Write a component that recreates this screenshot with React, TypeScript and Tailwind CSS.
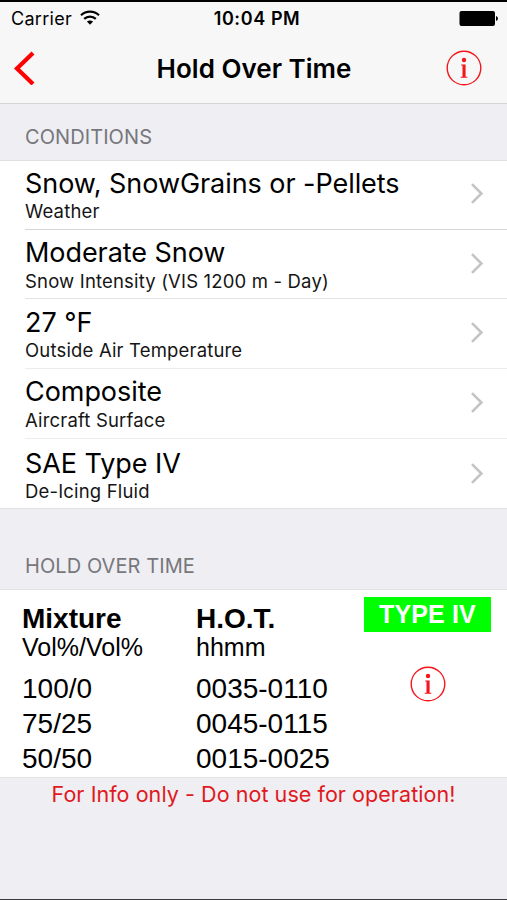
import React from "react"

interface ConditionProps {
    title: string;
    subtitle: string;
    rowClass: string;
    subtitleClass: string;
    arrowClass: string;
}

const conditions: ConditionProps[] = [
    { title: "Snow, SnowGrains or -Pellets", subtitle: "Weather", rowClass: "h-[69px] pt-[7px] border-[#d6d6d8]", subtitleClass: "", arrowClass: "mt-[15px]" },
    { title: "Moderate Snow", subtitle: "Snow Intensity (VIS 1200 m - Day)", rowClass: "h-[69px] pt-[7px] border-[#e4e4e6]", subtitleClass: "pt-px", arrowClass: "mt-[16px]" },
    { title: "27 °F", subtitle: "Outside Air Temperature", rowClass: "h-[70px] pt-[8px] border-[#ececee]", subtitleClass: "", arrowClass: "mt-[15px]" },
    { title: "Composite", subtitle: "Aircraft Surface", rowClass: "h-[70px] pt-[7px] border-[#ececee]", subtitleClass: "pt-px", arrowClass: "mt-[16px]" },
    { title: "SAE Type IV", subtitle: "De-Icing Fluid", rowClass: "h-[69px] pt-[9px] border-transparent", subtitleClass: "", arrowClass: "mt-[15px]" },
]

const holdOverTimes = [
    { mixture: "100/0", time: "0035-0110" },
    { mixture: "75/25", time: "0045-0115" },
    { mixture: "50/50", time: "0015-0025" },
]

const InfoIcon: React.FC = () => {
    return (
        <svg width="36" height="36" viewBox="0 0 36 36" fill="none">
            <circle cx="18" cy="18" r="16.8" stroke="#f5151b" strokeWidth="1.4" />
            <circle cx="18" cy="10" r="2.2" fill="#f5151b" />
            <path d="M15.2 14.4h4.4v12.3h1.7v1h-6.6v-1h1.8V15.4h-1.3z" fill="#f5151b" />
        </svg>
    )
}

const ConditionRow: React.FC<ConditionProps> = ({ title, subtitle, rowClass, subtitleClass, arrowClass }) => {
    return (
        <div className={`ml-[25px] flex justify-between border-b ${rowClass}`}>
            <div className="whitespace-nowrap text-black">
                <h2 className="text-[27px] leading-8 tracking-[-0.06px]">{title}</h2>
                <p className={`text-[18.5px] leading-[22px] tracking-[0.17px] text-[#151515] ${subtitleClass}`}>{subtitle}</p>
            </div>
            <svg className={`mr-[23px] shrink-0 ${arrowClass}`} width="14" height="21" viewBox="0 0 14 21" fill="none">
                <path d="M2 1.2L11.4 10.5L2 19.8" stroke="#c4c4c8" strokeWidth="2.6" />
            </svg>
        </div>
    )
}

const Header: React.FC = () => {
    return (
        <header className="h-[104px] border-t-2 border-b border-t-black border-b-[#d3d3d6] bg-[#f7f7f8] text-black">
            <div className="grid h-8 grid-cols-3 items-center pr-[8px] pl-[11px]">
                <div className="flex items-center gap-[8px]">
                    <span className="text-[18px] tracking-[0.3px]">Carrier</span>
                    <svg className="mb-[2px]" width="20" height="15" viewBox="0 0 20 15" fill="none">
                        <path d="M1 5.2A13 13 0 0 1 19 5.2" stroke="black" strokeWidth="2.2" />
                        <path d="M4.2 8.9A8.4 8.4 0 0 1 15.8 8.9" stroke="black" strokeWidth="2.2" />
                        <path d="M6.9 11.6A5 5 0 0 1 13.1 11.6L10 14.8Z" fill="black" />
                    </svg>
                </div>
                <span className="pl-[4px] text-center text-[18px] font-semibold tracking-[0.6px]">10:04 PM</span>
                <svg className="justify-self-end" width="40" height="17" viewBox="0 0 40 17">
                    <rect x="0.5" y="1" width="35.5" height="15" rx="2" fill="black" />
                    <path d="M37 6c2.6 0.8 2.6 4.2 0 5z" fill="black" />
                </svg>
            </div>
            <div className="grid h-[67px] grid-cols-[70px_1fr_70px] items-center pr-[12px] pl-[13px]">
                <svg width="36" height="34" viewBox="0 0 36 34" fill="none">
                    <path d="M20 2L4 17.5L20 33" stroke="#ff0000" strokeWidth="4.2" />
                </svg>
                <h1 className="pt-[2px] text-center text-[26px] font-semibold tracking-[0.02px]">Hold Over Time</h1>
                <div className="justify-self-end pr-[13px]">
                    <InfoIcon />
                </div>
            </div>
        </header>
    )
}

const HoldOverPanel: React.FC = () => {
    return (
        <section className="flex h-[189px] justify-between border-y border-[#e2e2e5] bg-white pr-4 pl-[22px] font-['Liberation_Sans',sans-serif] text-black">
            <div className="pt-[13px]">
                <div className="grid grid-cols-[174px_150px] text-[28px] leading-8 font-bold">
                    <h2>Mixture</h2>
                    <h2>H.O.T.</h2>
                </div>
                <div className="mb-[12px] grid grid-cols-[174px_150px] text-[25px] leading-[24px]">
                    <p>Vol%/Vol%</p>
                    <p>hhmm</p>
                </div>
                {holdOverTimes.map((row) => (
                    <div key={row.mixture} className="grid grid-cols-[174px_150px] text-[28px] leading-[35px]">
                        <p>{row.mixture}</p>
                        <p>{row.time}</p>
                    </div>
                ))}
            </div>
            <div className="flex w-[127px] flex-col items-center pt-[7px]">
                <div className="mb-[34px] h-[35px] w-full bg-[#00ff00] text-center text-[25px] leading-[34px] font-bold tracking-[0.15px] text-white">TYPE IV</div>
                <InfoIcon />
            </div>
        </section>
    )
}

export default function App() {
    return (
        <main className="flex h-[900px] w-[507px] flex-col overflow-hidden border-b border-[#3a3a3c] bg-[#eeeef3] font-['Inter',sans-serif]">
            <Header />
            <h3 className="h-14 pt-[19px] pl-[25px] text-[20px] leading-7 tracking-[0.08px] text-[#77777c]">CONDITIONS</h3>
            <section className="border-y border-[#e0e0e3] bg-white">
                {conditions.map((condition) => (
                    <ConditionRow key={condition.title} {...condition} />
                ))}
            </section>
            <h3 className="h-20 pt-[43px] pl-[25px] text-[20px] leading-7 tracking-[0.08px] text-[#77777c]">HOLD OVER TIME</h3>
            <HoldOverPanel />
            <p className="text-center text-[21.5px] leading-8 tracking-[0.06px] text-[#e01820]">For Info only - Do not use for operation!</p>
        </main>
    )
}
